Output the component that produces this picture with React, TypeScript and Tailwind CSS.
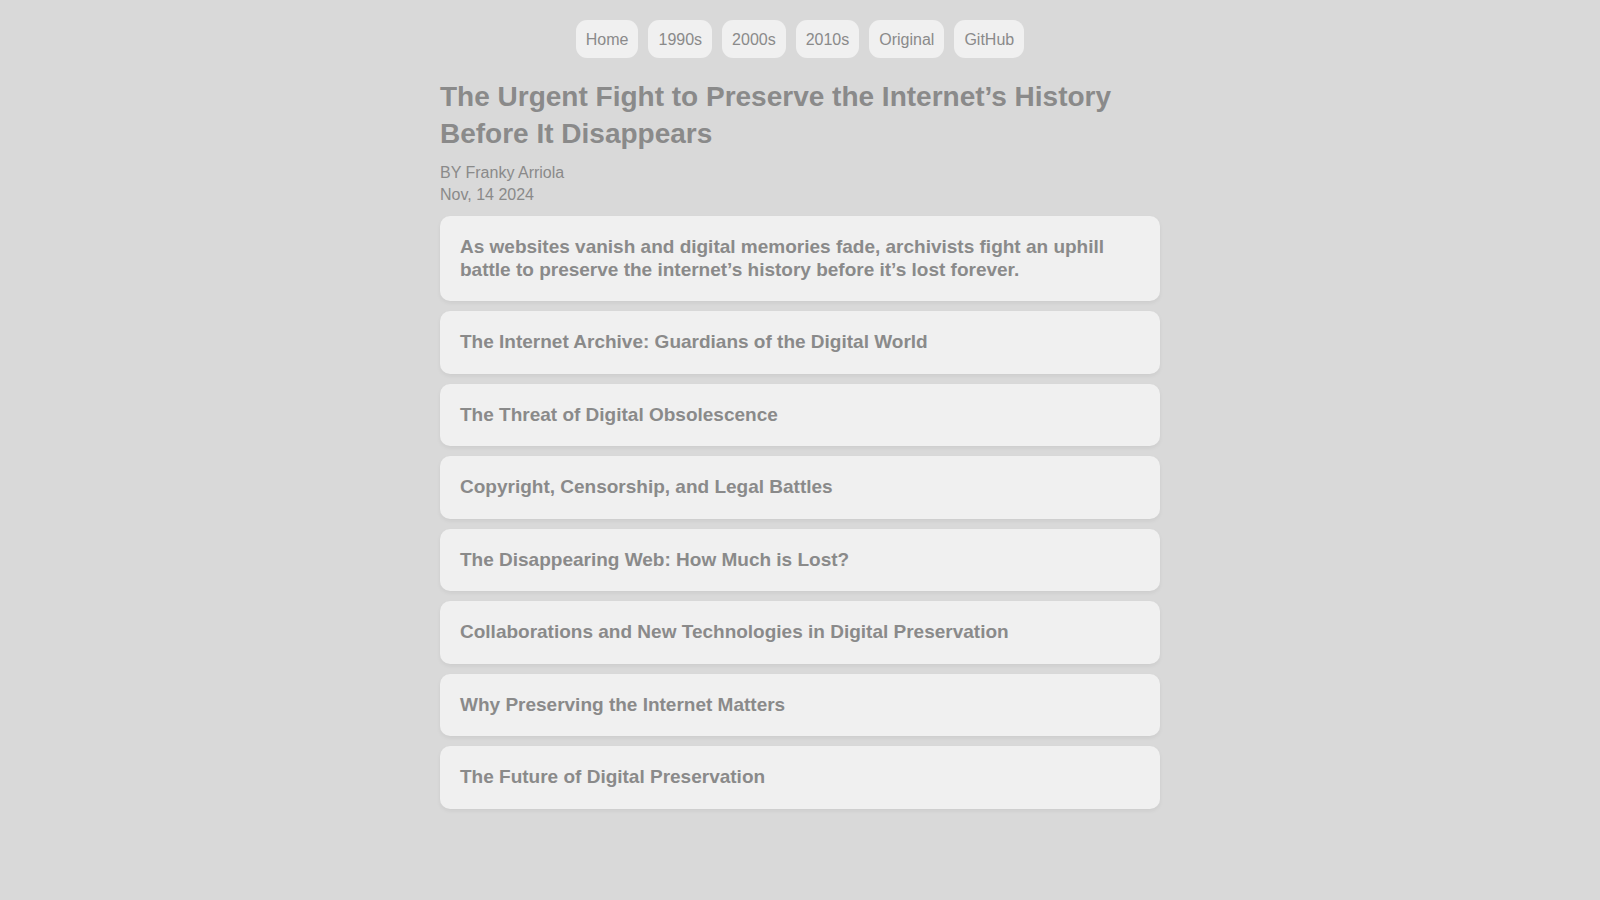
import React from "react";

const links = ["Home", "1990s", "2000s", "2010s", "Original", "GitHub"];

const sections = [
  "The Internet Archive: Guardians of the Digital World",
  "The Threat of Digital Obsolescence",
  "Copyright, Censorship, and Legal Battles",
  "The Disappearing Web: How Much is Lost?",
  "Collaborations and New Technologies in Digital Preservation",
  "Why Preserving the Internet Matters",
  "The Future of Digital Preservation",
];

const cardClass =
  "rounded-[10px] bg-[#f0f0f0] px-5 py-5 text-[19px] font-bold leading-[22.5px] shadow-[0_2px_4px_rgba(0,0,0,0.06)]";

export default function App() {
  return (
    <div
      className="min-h-screen bg-[#d9d9d9] pt-5 pb-10 text-[#8a8a8a]"
      style={{ fontFamily: '"Liberation Sans", Arial, Helvetica, sans-serif' }}
    >
      <nav className="flex justify-center gap-2.5">
        {links.map((l) => (
          <a
            key={l}
            href="#"
            className="rounded-[11px] bg-[#f0f0f0] px-2.5 pt-[11px] pb-[9px] text-base leading-[18px] text-[#8a8a8a]"
          >
            {l}
          </a>
        ))}
      </nav>

      <main className="mx-auto mt-5 flex w-[720px] flex-col gap-2.5">
        <h1 className="text-[28px] font-bold leading-[37px]">
          The Urgent Fight to Preserve the Internet’s History Before It Disappears
        </h1>
        <div className="text-base leading-[22px]">
          <p>BY Franky Arriola</p>
          <p>Nov, 14 2024</p>
        </div>

        <div className={cardClass}>
          As websites vanish and digital memories fade, archivists fight an uphill
          battle to preserve the internet’s history before it’s lost forever.
        </div>

        {sections.map((s) => (
          <div key={s} className={cardClass}>
            {s}
          </div>
        ))}
      </main>
    </div>
  );
}
